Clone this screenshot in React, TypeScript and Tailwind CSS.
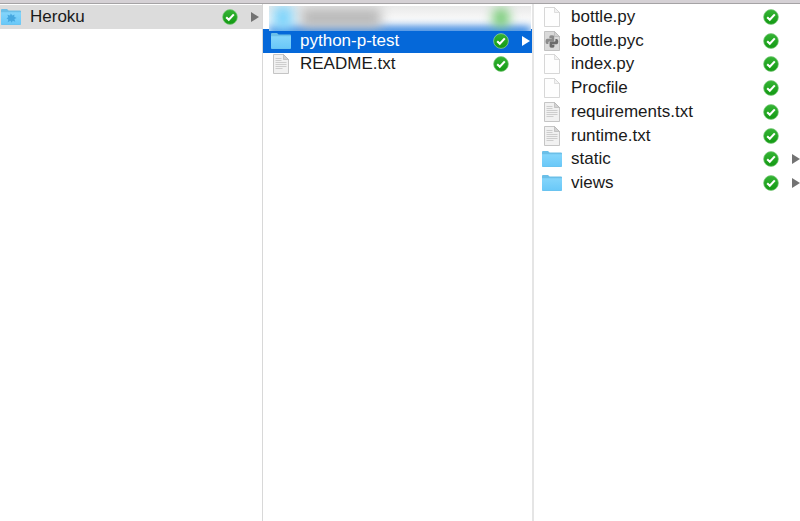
import { ReactNode } from "react";
import clsx from "clsx";

type Kind = "heroku" | "folder" | "page" | "text" | "python";

interface Entry {
  name: string;
  kind: Kind;
  expandable?: boolean;
}

const files: Entry[] = [
  { name: "bottle.py", kind: "page" },
  { name: "bottle.pyc", kind: "python" },
  { name: "index.py", kind: "page" },
  { name: "Procfile", kind: "page" },
  { name: "requirements.txt", kind: "text" },
  { name: "runtime.txt", kind: "text" },
  { name: "static", kind: "folder", expandable: true },
  { name: "views", kind: "folder", expandable: true },
];

function FolderIcon({ badge }: { badge?: boolean }) {
  return (
    <svg viewBox="0 0 20 20" className="h-5 w-5 shrink-0">
      <defs>
        <linearGradient id="folder" x1="0" y1="0" x2="0" y2="1">
          <stop offset="0" stopColor="#84d5fb" />
          <stop offset="1" stopColor="#69c8f8" />
        </linearGradient>
      </defs>
      <path d="M0 3Q0 2 1 2H6l1.6 1.5h11.4q1 0 1 1V17q0 1-1 1H1q-1 0-1-1z" fill="#6bbfe8" />
      <path d="M0 5.2h20V16.6q0 1-1 1H1q-1 0-1-1z" fill="url(#folder)" />
      {badge && (
        <path
          d="M6.4 7.8l2.6.7L9.8 6.6l1.6 2 2.1-1.1-.3 2.3 2.5 1.3-2.3 1 .9 2.6-2.6-.9-1 2-1.3-2-2.7 1.5.6-2.9-1.8-1.1 1.8-1.1z"
          fill="#46a8e0"
        />
      )}
    </svg>
  );
}

function PageIcon({ lines, python }: { lines?: boolean; python?: boolean }) {
  return (
    <svg viewBox="0 0 20 20" className="h-5 w-5 shrink-0">
      <path
        d="M2.5.5H12.5l5 5v14h-15z"
        fill={python ? "#dadada" : lines ? "#f1f1f1" : "#fefefe"}
        stroke={lines || python ? "#b8b8b8" : "#cdcdcd"}
        strokeWidth=".8"
      />
      <path
        d="M12.5.5v5h5z"
        fill={lines || python ? "#d2d2d2" : "#f2f2f2"}
        stroke={lines || python ? "#b0b0b0" : "#cdcdcd"}
        strokeWidth=".6"
      />
      {lines && (
        <path
          d="M4.5 4.5h6M4.5 6.5h6M4.5 8.5h11M4.5 10.5h11M4.5 12.5h11M4.5 14.5h7"
          stroke="#c4c4c4"
          strokeWidth=".8"
        />
      )}
      {python && (
        <>
          <path d="M7.4 5.4q0-1.2 2.4-1.2t2.4 1.2v4q0 1-1 1H7.6q-1.2 0-1.2 1.2v1.4H5q-1.5 0-1.5-2.6T5 7.8h4.7v-.5H7.4z" fill="#8b8b8b" />
          <path d="M12.4 15.6q0 1.2-2.4 1.2t-2.4-1.2v-4q0-1 1-1h3.6q1.2 0 1.2-1.2V8h1.4q1.5 0 1.5 2.6t-1.5 2.6h-4.7v.5h2.3z" fill="#6c6c6c" />
        </>
      )}
    </svg>
  );
}

function FileIcon({ kind }: { kind: Kind }) {
  if (kind === "heroku") return <FolderIcon badge />;
  if (kind === "folder") return <FolderIcon />;
  return <PageIcon lines={kind === "text"} python={kind === "python"} />;
}

function SyncedIcon({ ring }: { ring?: boolean }) {
  return (
    <svg viewBox="0 0 16 16" className="h-4 w-4 shrink-0">
      <defs>
        <linearGradient id="synced" x1="0" y1="0" x2="0" y2="1">
          <stop offset="0" stopColor="#35b435" />
          <stop offset="1" stopColor="#129912" />
        </linearGradient>
      </defs>
      <circle cx="8" cy="8" r="7.4" fill="url(#synced)" stroke={ring ? "#9fd5a8" : "#7fca7f"} strokeWidth=".7" />
      <path d="M4.2 8.3l2.6 2.5 5-5.4" fill="none" stroke="#fff" strokeWidth="2.1" />
    </svg>
  );
}

interface RowProps {
  entry: Entry;
  className?: string;
  active?: boolean;
}

function Row({ entry, className, active }: RowProps) {
  return (
    <li className="min-h-0">
      <button
        type="button"
        className={clsx(
          "flex h-full w-full items-center text-left text-[17px] leading-5",
          active ? "bg-[#0568d9] text-white" : "text-[#1a1a1a]",
          className,
        )}
      >
        <FileIcon kind={entry.kind} />
        <span className="ml-[9px] flex-1 truncate">{entry.name}</span>
        <SyncedIcon ring={active} />
        <span className="ml-[13px] flex h-5 w-2 shrink-0 items-center">
          {entry.expandable && (
            <svg viewBox="0 0 8 10" className={clsx("h-[10px] w-2", active ? "text-white" : "text-[#737373]")}>
              <path d="M0 0l8 5-8 5z" fill="currentColor" />
            </svg>
          )}
        </span>
      </button>
    </li>
  );
}

function Column({ label, className, children }: { label: string; className?: string; children: ReactNode }) {
  return (
    <section aria-label={label} className={clsx("min-w-0 pt-px", className)}>
      <ul className="grid h-[190px] grid-rows-8">{children}</ul>
    </section>
  );
}

// redacted folder, kept unreadable
function HiddenRow() {
  return (
    <li className="relative min-h-0">
      <div className="absolute top-px right-px -bottom-[2px] left-[6px] z-10 overflow-hidden bg-linear-to-b from-[#e9e9e9] via-[#f8f8f8] to-[#ffffff]">
        <div className="absolute inset-x-0 -bottom-1 h-2 bg-[#0568d9] blur-[4px]" />
        <div className="flex h-6 items-center pr-[22px] pl-1 blur-[6px]">
          <span className="h-6 w-5 bg-[#7fd4fb]" />
          <span className="ml-2 h-5 w-20 bg-[#b9b9b9]" />
          <span className="ml-auto h-5 w-4 rounded-full bg-[#6bc76b]" />
        </div>
      </div>
    </li>
  );
}

export default function App() {
  return (
    <main className="flex min-h-screen flex-col bg-white font-['Liberation_Sans',Arial,sans-serif]">
      <div className="h-1 border-b border-[#a5a3a5] bg-[#d5d1d5]" />
      <div className="grid flex-1 grid-cols-[263fr_271fr_266fr]">
        <Column label="Folders" className="border-r border-[#d8d8d8]">
          <Row
            entry={{ name: "Heroku", kind: "heroku", expandable: true }}
            className="bg-[#dcdcdc] pr-[3px] pl-px"
          />
        </Column>
        <Column label="Heroku" className="border-r-2 border-[#e5e5e5]">
          <HiddenRow />
          <Row
            entry={{ name: "python-p-test", kind: "folder", expandable: true }}
            className="pr-[2px] pl-2"
            active
          />
          <Row entry={{ name: "README.txt", kind: "text" }} className="pr-[2px] pl-2" />
        </Column>
        <Column label="python-p-test">
          {files.map((file) => (
            <Row key={file.name} entry={file} className="pl-2" />
          ))}
        </Column>
      </div>
    </main>
  );
}
